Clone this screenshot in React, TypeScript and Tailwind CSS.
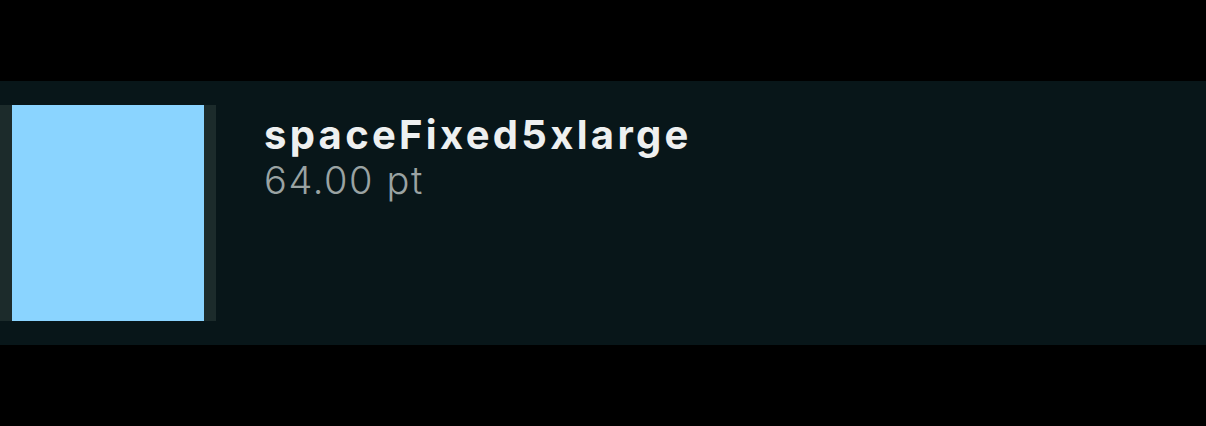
import React from 'react';

export default function App() {
  return (
    <div className="w-[1206px] h-[426px] bg-black pt-[81px]">
      <div className="h-[264px] bg-[#081619] flex items-start pt-6 gap-12">
        <div className="w-[216px] h-[216px] bg-[#1c2b2b] px-3 shrink-0">
          <div className="w-full h-full bg-[#8ad4ff]" />
        </div>
        <div className="flex flex-col font-['Inter','Lato',sans-serif] leading-none">
          <div className="text-[40px] font-bold text-[#eef0f0] mt-[10px] tracking-[3.3px]">spaceFixed5xlarge</div>
          <div className="text-[38px] font-light text-[#9aa3a3] mt-[6px] tracking-[1.6px]">64.00 pt</div>
        </div>
      </div>
    </div>
  );
}
